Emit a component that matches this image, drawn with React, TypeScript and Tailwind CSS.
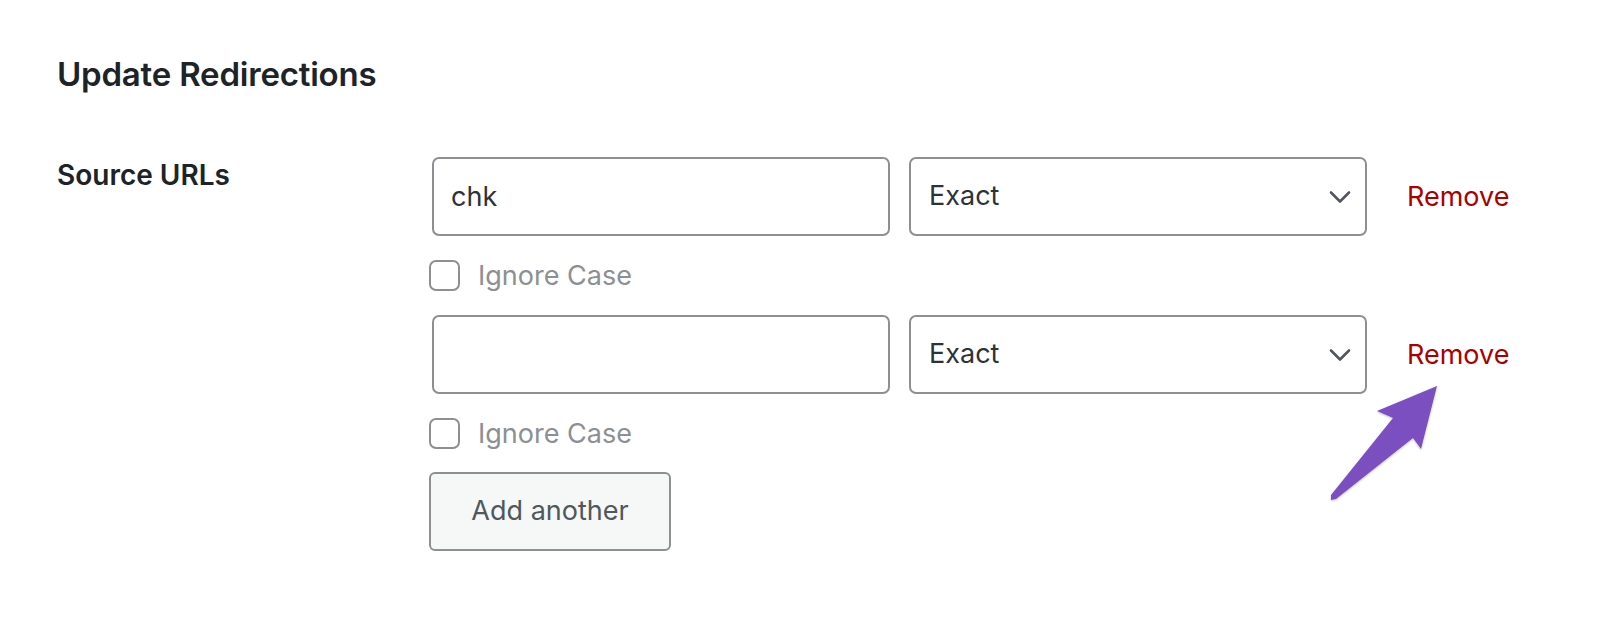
import { useState } from "react";

interface SourceRow {
    url: string;
    match: string;
    ignoreCase: boolean;
}

const Chevron = () => (
    <svg width="22" height="13" viewBox="0 0 22 13" fill="none">
        <path d="M2 2l9 9 9-9" stroke="#50575e" strokeWidth="2.6" strokeLinecap="round" strokeLinejoin="round" />
    </svg>
);

// purple annotation arrow pointing at the second Remove link
const PointerArrow = () => (
    <svg className="absolute left-[1320px] top-[376px]" width="130" height="135" viewBox="1320 376 130 135">
        <defs>
            <filter id="arrow-shadow" x="-20%" y="-20%" width="140%" height="140%">
                <feDropShadow dx="0" dy="1" stdDeviation="1.2" floodColor="#000" floodOpacity="0.25" />
            </filter>
        </defs>
        <polygon
            points="1437,386 1421,449 1413,438 1336,499 1331,500 1331,495 1393,418 1377,411"
            fill="#7b4fc0"
            filter="url(#arrow-shadow)"
        />
    </svg>
);

const App = () => {
    const [rows, setRows] = useState<SourceRow[]>([
        { url: "chk", match: "Exact", ignoreCase: false },
        { url: "", match: "Exact", ignoreCase: false },
    ]);

    const updateRow = (i: number, patch: Partial<SourceRow>) => {
        setRows(rows.map((r, idx) => (idx === i ? { ...r, ...patch } : r)));
    };

    return (
        <div className="relative min-h-[638px] w-full bg-white pl-[57px] pt-[54px] text-[#2c3338] font-['Inter',sans-serif]">
            <h2 className="text-[33px] leading-[40px] font-semibold text-[#1d2327] tracking-[-0.2px]">Update Redirections</h2>

            <div className="mt-[63px] flex">
                <div className="w-[372px] pt-[2px] text-[28px] leading-[32px] font-semibold text-[#1d2327]">
                    Source URLs
                </div>

                <div className="flex flex-col">
                    {rows.map((row, i) => (
                        <div key={i} className="flex flex-col">
                            <div className="flex items-center">
                                <input
                                    type="text"
                                    value={row.url}
                                    onChange={(e) => updateRow(i, { url: e.target.value })}
                                    className="ml-[3px] h-[79px] w-[458px] rounded-[7px] border-2 border-[#8c8f94] bg-white px-[17px] text-[27px] text-[#2c3338] outline-none"
                                />
                                <div className="relative ml-[19px]">
                                    <select
                                        value={row.match}
                                        onChange={(e) => updateRow(i, { match: e.target.value })}
                                        className="h-[79px] w-[458px] appearance-none rounded-[7px] border-2 border-[#8c8f94] bg-white pl-[18px] pr-[50px] text-[27px] text-[#2c3338] outline-none"
                                    >
                                        <option>Exact</option>
                                        <option>Contains</option>
                                        <option>Starts With</option>
                                        <option>End With</option>
                                        <option>Regex</option>
                                    </select>
                                    <span className="pointer-events-none absolute right-[16px] top-1/2 -translate-y-1/2 flex">
                                        <Chevron />
                                    </span>
                                </div>
                                <button
                                    type="button"
                                    onClick={() => setRows(rows.filter((_, idx) => idx !== i))}
                                    className="ml-[40px] text-[27px] leading-[32px] text-[#a00]"
                                >
                                    Remove
                                </button>
                            </div>

                            <label className="my-[24px] flex h-[31px] items-center">
                                <input
                                    type="checkbox"
                                    checked={row.ignoreCase}
                                    onChange={(e) => updateRow(i, { ignoreCase: e.target.checked })}
                                    className="h-[31px] w-[31px] appearance-none rounded-[7px] border-2 border-[#8c8f94] bg-white"
                                />
                                <span className="ml-[18px] text-[27px] leading-[31px] text-[#8c8f94]">Ignore Case</span>
                            </label>
                        </div>
                    ))}

                    <button
                        type="button"
                        onClick={() => setRows([...rows, { url: "", match: "Exact", ignoreCase: false }])}
                        className="-mt-[1px] h-[79px] w-[242px] rounded-[6px] border-2 border-[#8c8f94] bg-[#f6f7f7] text-[27px] text-[#50575e]"
                    >
                        Add another
                    </button>
                </div>
            </div>

            <PointerArrow />
        </div>
    );
};

export default App;
